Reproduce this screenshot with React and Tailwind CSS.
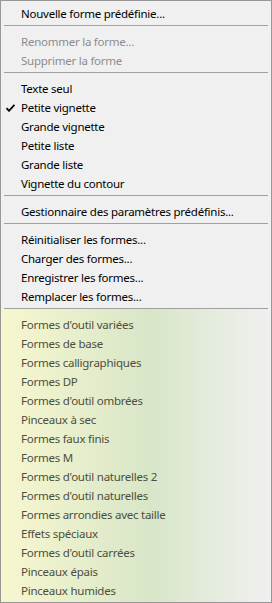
import React from "react";

const groups = [
  [{ label: "Nouvelle forme prédéfinie..." }],
  [
    { label: "Renommer la forme...", disabled: true },
    { label: "Supprimer la forme", disabled: true },
  ],
  [
    { label: "Texte seul" },
    { label: "Petite vignette", checked: true },
    { label: "Grande vignette" },
    { label: "Petite liste" },
    { label: "Grande liste" },
    { label: "Vignette du contour" },
  ],
  [{ label: "Gestionnaire des paramètres prédéfinis..." }],
  [
    { label: "Réinitialiser les formes..." },
    { label: "Charger des formes..." },
    { label: "Enregistrer les formes..." },
    { label: "Remplacer les formes..." },
  ],
];

const libraries = [
  "Formes d'outil variées",
  "Formes de base",
  "Formes calligraphiques",
  "Formes DP",
  "Formes d'outil ombrées",
  "Pinceaux à sec",
  "Formes faux finis",
  "Formes M",
  "Formes d'outil naturelles 2",
  "Formes d'outil naturelles",
  "Formes arrondies avec taille",
  "Effets spéciaux",
  "Formes d'outil carrées",
  "Pinceaux épais",
  "Pinceaux humides",
];

function Check() {
  return (
    <svg width="9" height="8" viewBox="0 0 9 8" className="absolute left-[5px] top-[6px]">
      <path d="M0.5 4.2 L3 6.8 L8.5 0.8" fill="none" stroke="#000" strokeWidth="1.8" />
    </svg>
  );
}

function Item({ label, disabled, checked, muted }) {
  const color = disabled ? "text-[#8d8d8d]" : muted ? "text-[#4c4f3e]" : "text-black";
  return (
    <div className={`relative h-[19px] flex items-center pl-[20px] whitespace-nowrap ${color}`}>
      {checked && <Check />}
      {label}
    </div>
  );
}

function Separator({ last }) {
  return (
    <div className={`${last ? "" : "h-[9px]"} pt-[2px] px-[3px]`}>
      <div className="w-full h-px bg-[#a0a0a0]" />
    </div>
  );
}

export default function App() {
  return (
    <div
      className="w-[272px] h-[603px] border border-[#979797] bg-[#f0f0f0] flex flex-col text-[11.5px] tracking-[-0.25px] leading-none"
      style={{ fontFamily: '"Noto Sans", "Open Sans", sans-serif' }}
    >
      <div className="pt-[3px]">
        {groups.map((g, i) => (
          <div key={i}>
            {i > 0 && <Separator />}
            {g.map((it) => (
              <Item key={it.label} {...it} />
            ))}
          </div>
        ))}
        <Separator last />
      </div>
      <div className="flex-1 pt-[6px] bg-linear-to-r from-[#f7f7cf] via-[#d8e6c8] via-55% to-[#f0f0f0]">
        {libraries.map((l) => (
          <Item key={l} label={l} muted />
        ))}
      </div>
    </div>
  );
}
